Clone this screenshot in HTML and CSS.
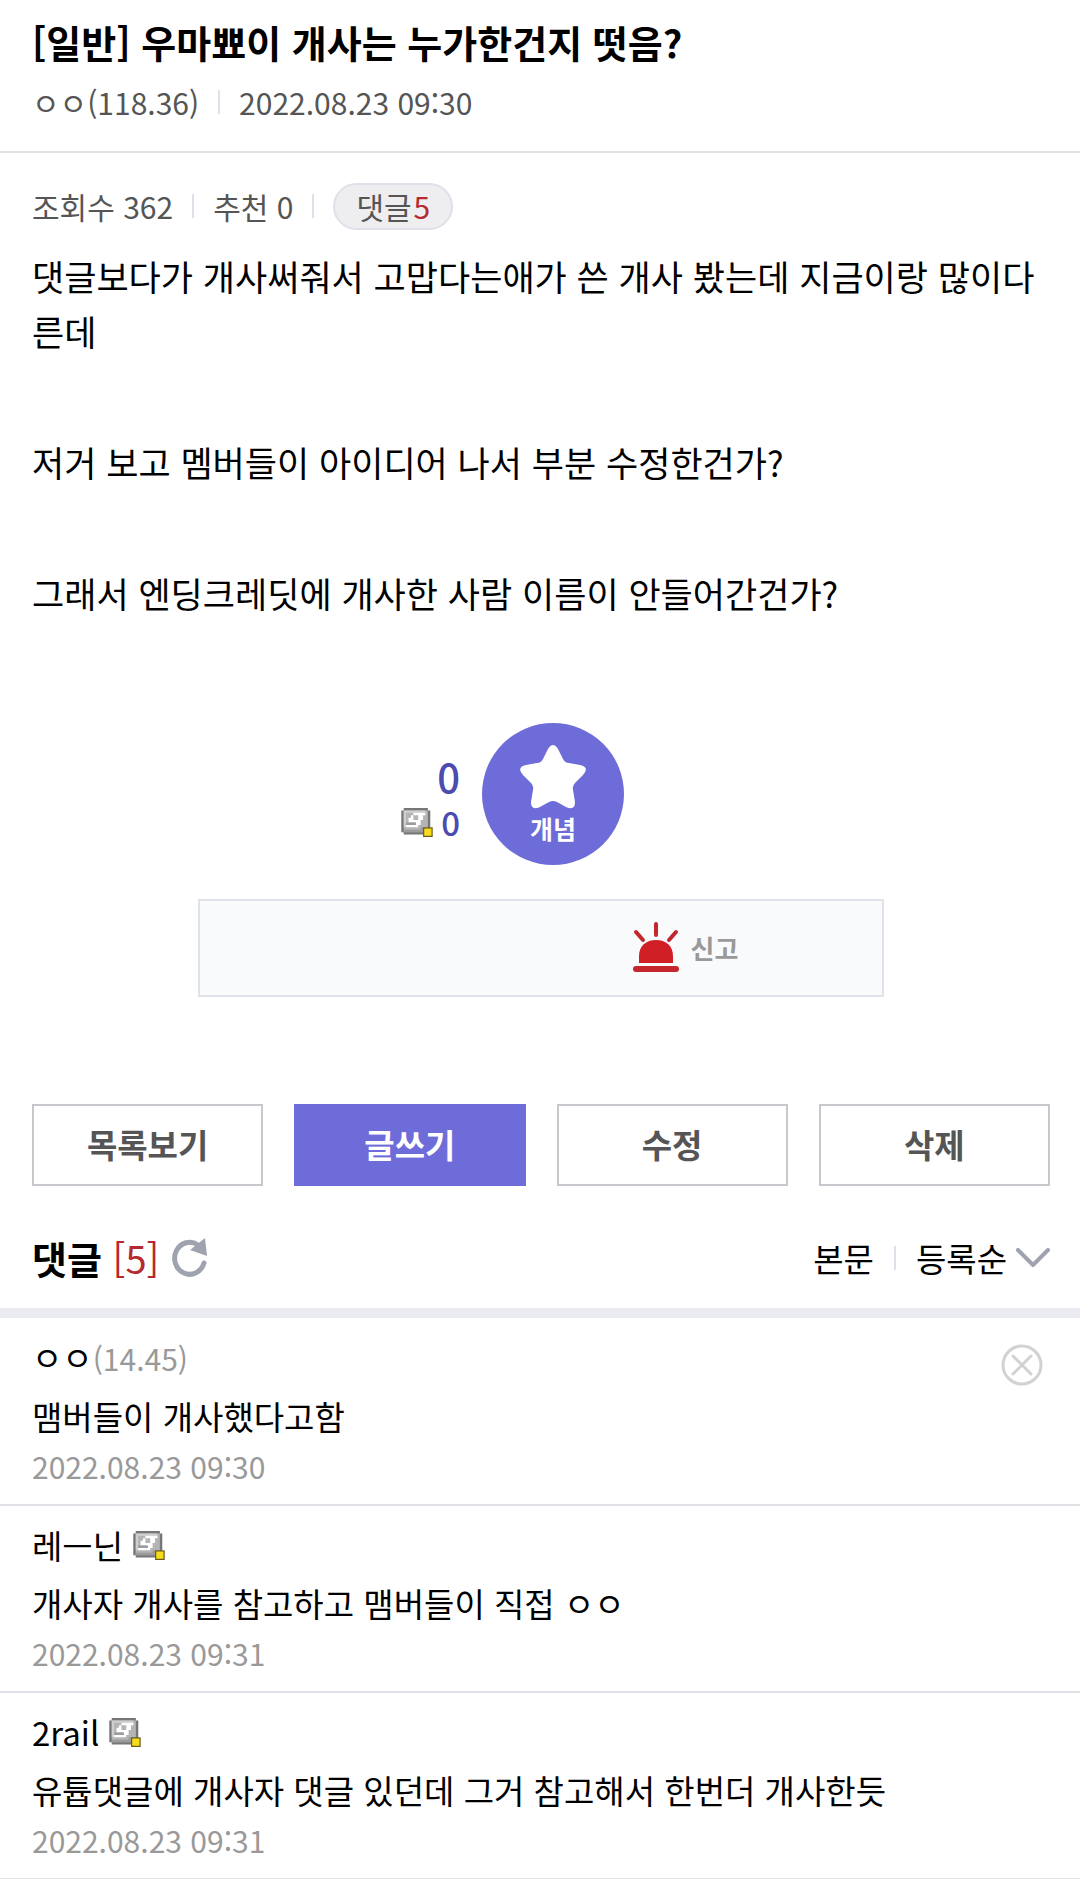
FILE: index.html
```html
<!DOCTYPE html>
<html lang="ko">
<head>
  <meta charset="UTF-8" />
  <meta name="viewport" content="width=device-width, initial-scale=1.0"/>
  <title>우마뾰이 개사는 누가한건지 떳음?</title>
  <link rel="stylesheet" href="styles.css">
</head>
<body>

<!-- Shared nickname badge -->
<svg class="defs" width="0" height="0" aria-hidden="true">
  <symbol id="nickBadge" viewBox="0 0 13 12">
    <path fill="#767676" d="M1 0h10v1h1v9h-1v1H1v-1H0V1h1z"/>
    <path fill="#b4b4b4" d="M1 1h10v9H1z"/>
    <path fill="#cfcfcf" d="M1 1h9v1H2v6H1z"/>
    <path fill="#9b9b9b" d="M8 8h3v2H1V9h7z"/>
    <path fill="#fff" d="M5 2h5v1H5zM4 3h1v1H4zM3 4h2v1H3zM7 3h2v2H7zM3 5h5v1H3zM6 6h2v1H6zM2 7h5v1H2z"/>
    <path fill="#9b9b9b" d="M2 6h4v1H2z"/>
    <path fill="#6b5c14" d="M9 8h4v4H9z"/>
    <path fill="#f7dc1e" d="M9.5 8.5h3v3h-3z"/>
  </symbol>
</svg>

<header class="post-head">
  <h1 class="post-title">[일반] 우마뾰이 개사는 누가한건지 떳음?</h1>
  <div class="meta">
    <span>ㅇㅇ(118.36)</span>
    <span class="bar"></span>
    <span>2022.08.23 09:30</span>
  </div>
</header>

<main class="post">
  <div class="meta post-info">
    <span>조회수 362</span>
    <span class="bar"></span>
    <span>추천 0</span>
    <span class="bar"></span>
    <a class="reply-pill" href="#comments">댓글<span class="red">5</span></a>
  </div>

  <div class="post-body">
    <p>댓글보다가 개사써줘서 고맙다는애가 쓴 개사 봤는데 지금이랑 많이다른데</p>
    <p>저거 보고 멤버들이 아이디어 나서 부분 수정한건가?</p>
    <p>그래서 엔딩크레딧에 개사한 사람 이름이 안들어간건가?</p>
  </div>

  <div class="vote">
    <div class="vote-count">
      <span class="vote-up">0</span>
      <span class="vote-fixed"><svg class="badge" aria-hidden="true"><use href="#nickBadge"/></svg>0</span>
    </div>
    <button class="vote-btn" type="button">
      <svg class="star" viewBox="0 0 66 64" aria-hidden="true">
        <path fill="#fff" d="M28 4Q33-4 38 4L43 14Q45 18 49 18L60 20Q70 22 63 30L55 38Q52 41 53 45L55 57Q55 66 46 62L37 57Q33 55 29 57L20 62Q11 66 11 57L13 45Q14 41 11 38L3 30Q-4 22 6 20L17 18Q21 18 23 14z"/>
      </svg>
      개념
    </button>
    <div></div>
  </div>

  <div class="report-box">
    <button class="report-btn" type="button">
      <svg class="siren" viewBox="0 0 46 51" aria-hidden="true">
        <path fill="#d02026" d="M6 41V34C6 24 13 18 23 18s17 6 17 16v7z"/>
        <rect x="0" y="44" width="46" height="6" rx="3" fill="#c4262c"/>
        <path fill="none" stroke="#c1272d" stroke-width="4" stroke-linecap="round" d="M23 2v11M3 10l7 8M43 10l-7 8"/>
      </svg>
      신고
    </button>
  </div>

  <div class="btn-row">
    <button class="btn" type="button">목록보기</button>
    <button class="btn btn-write" type="button">글쓰기</button>
    <button class="btn" type="button">수정</button>
    <button class="btn" type="button">삭제</button>
  </div>
</main>

<section id="comments">
  <div class="comment-head">
    <h2>댓글 <span class="red">[5]</span></h2>
    <button class="icon-btn" type="button" aria-label="새로고침">
      <svg class="refresh" viewBox="0 0 36 40" aria-hidden="true">
        <path fill="none" stroke="#9fa3b0" stroke-width="5" stroke-linecap="round" d="M32 25A15 16 0 1 1 26 7"/>
        <path fill="#9fa3b0" d="M33 0l2 18-17-6z"/>
      </svg>
    </button>
    <div class="comment-nav">
      <a href="#">본문</a>
      <span class="bar"></span>
      <button class="sort-btn" type="button">등록순
        <svg class="chevron" viewBox="0 0 34 20" aria-hidden="true">
          <path fill="none" stroke="#9fa3b0" stroke-width="4" stroke-linecap="round" stroke-linejoin="round" d="M2 2l15 15L32 2"/>
        </svg>
      </button>
    </div>
  </div>

  <ul class="comment-list">
    <li class="comment">
      <div class="comment-main">
        <div class="nick"><span>ㅇㅇ<span class="ip">(14.45)</span></span></div>
        <p class="comment-text">맴버들이 개사했다고함</p>
        <div class="date">2022.08.23 09:30</div>
      </div>
      <button class="icon-btn" type="button" aria-label="삭제">
        <svg class="close" viewBox="0 0 42 42" aria-hidden="true">
          <g fill="none" stroke="#d2d2d4" stroke-width="3" stroke-linecap="round">
            <circle cx="21" cy="21" r="19"/>
            <path d="M12 12l18 18M30 12L12 30"/>
          </g>
        </svg>
      </button>
    </li>
    <li class="comment">
      <div class="comment-main">
        <div class="nick">레ㅡ닌 <svg class="badge" aria-hidden="true"><use href="#nickBadge"/></svg></div>
        <p class="comment-text">개사자 개사를 참고하고 맴버들이 직접 ㅇㅇ</p>
        <div class="date">2022.08.23 09:31</div>
      </div>
    </li>
    <li class="comment">
      <div class="comment-main">
        <div class="nick">2rail <svg class="badge" aria-hidden="true"><use href="#nickBadge"/></svg></div>
        <p class="comment-text">유튭댓글에 개사자 댓글 있던데 그거 참고해서 한번더 개사한듯</p>
        <div class="date">2022.08.23 09:31</div>
      </div>
    </li>
  </ul>
</section>

</body>
</html>
```

FILE: styles.css
```css
* {
  box-sizing: border-box;
}
body {
  margin: 0;
  background: #fff;
  color: #000;
  font-family: "Noto Sans CJK KR", sans-serif;
}
h1, h2, p, ul {
  margin: 0;
  padding: 0;
}
a {
  color: inherit;
  text-decoration: none;
}
button {
  padding: 0;
  border: 0;
  background: none;
  color: inherit;
  font-family: inherit;
  cursor: pointer;
}
svg {
  display: block;
  flex: none;
}
.defs {
  position: absolute;
}
.red {
  color: #b42a2f;
}
.badge {
  width: 32px;
  height: 29px;
}
.bar {
  width: 2px;
  height: 24px;
  background: #dfe1ea;
}

/* Post header */
.post-head {
  padding: 14px 32px 25px;
  border-bottom: 2px solid #e0e2e3;
}
.post-title {
  font-size: 38px;
  line-height: 56px;
}
.meta {
  display: flex;
  align-items: center;
  gap: 19px;
  margin-top: 8px;
  font-size: 30px;
  line-height: 48px;
  color: #555;
}

/* Post */
.post {
  padding: 0 30px 0 32px;
}
.post-info {
  margin-top: 29px;
}
.reply-pill {
  padding: 0 21px;
  border: 2px solid #dfe1ea;
  border-radius: 24px;
  background: #eeeef0;
  line-height: 43px;
}
.reply-pill .red {
  margin-left: 2px;
}
.post-body {
  display: flex;
  flex-direction: column;
  gap: 76px;
  padding-top: 18px;
  font-size: 35px;
  line-height: 55px;
  word-break: break-all;
}

/* Vote */
.vote {
  display: grid;
  grid-template-columns: 1fr auto 1fr;
  align-items: center;
  gap: 22px;
  margin: 103px -2px 0 22px;
}
.vote-count {
  display: flex;
  flex-direction: column;
  align-items: flex-end;
  padding-top: 10px;
  color: #4c4bb0;
  font-weight: 500;
}
.vote-up {
  font-size: 40px;
  line-height: 46px;
}
.vote-fixed {
  display: flex;
  align-items: center;
  gap: 8px;
  font-size: 33px;
  line-height: 46px;
}
.vote-btn {
  display: flex;
  flex-direction: column;
  align-items: center;
  width: 142px;
  height: 142px;
  padding-top: 22px;
  border-radius: 50%;
  background: #6e6cd8;
  color: #fff;
  font-size: 25px;
  font-weight: 700;
  line-height: 38px;
}
.star {
  width: 66px;
  height: 64px;
}

/* Report */
.report-box {
  display: grid;
  grid-template-columns: 1fr 1fr;
  width: 686px;
  max-width: 100%;
  height: 98px;
  margin: 34px auto 107px;
  border: 2px solid #dfe3e9;
  background: #f9fafc;
}
.report-btn {
  grid-column: 2;
  display: flex;
  align-items: center;
  justify-content: center;
  gap: 12px;
  padding: 0 52px 2px 0;
  color: #999;
  font-size: 26px;
  font-weight: 700;
}
.siren {
  width: 46px;
  height: 51px;
}

/* Buttons */
.btn-row {
  display: grid;
  grid-template-columns: repeat(4, 1fr);
  gap: 31px;
}
.btn {
  height: 82px;
  padding-bottom: 2px;
  border: 2px solid #c6c8ce;
  color: #555;
  font-size: 33px;
  font-weight: 700;
}
.btn-write {
  border-color: #6e6cd8;
  background: #6e6cd8;
  color: #fff;
}

/* Comments */
.comment-head {
  display: flex;
  align-items: center;
  padding: 44px 30px 22px 32px;
  border-bottom: 10px solid #eaebf0;
}
.comment-head h2 {
  margin-right: 13px;
  font-size: 38px;
  line-height: 56px;
}
.comment-head .red {
  font-weight: 400;
}
.refresh {
  width: 36px;
  height: 40px;
}
.comment-nav {
  display: flex;
  align-items: center;
  gap: 20px;
  margin-left: auto;
  font-size: 33px;
}
.sort-btn {
  display: flex;
  align-items: center;
  gap: 9px;
  font-size: 33px;
}
.chevron {
  width: 34px;
  height: 20px;
}
.comment-list {
  list-style: none;
}
.comment {
  display: flex;
  align-items: flex-start;
  padding: 14px 37px 14px 32px;
  border-bottom: 2px solid #e0e1e6;
}
.comment-main {
  flex: 1;
}
.comment .icon-btn {
  padding-top: 12px;
}
.nick {
  display: flex;
  align-items: center;
  gap: 10px;
  font-size: 33px;
  line-height: 50px;
}
.ip {
  font-size: 30px;
}
.ip, .date {
  color: #999;
}
.comment-text {
  padding-top: 6px;
  font-size: 33px;
  line-height: 54px;
}
.date {
  font-size: 30px;
  line-height: 47px;
}
.close {
  width: 42px;
  height: 42px;
}
```
